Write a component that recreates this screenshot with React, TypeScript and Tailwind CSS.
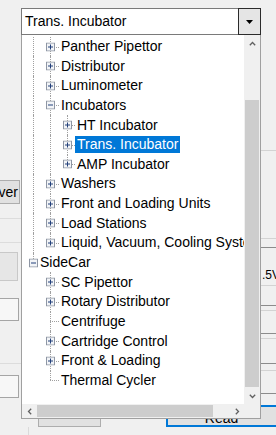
import type { ReactNode } from "react";

type TreeItem = {
  label: string;
  depth: 0 | 1 | 2;
  box?: "plus" | "minus";
  last?: boolean;
  cont: boolean[];
  selected?: boolean;
};

const ITEMS: TreeItem[] = [
  { label: "Panther Pipettor", depth: 1, box: "plus", cont: [true] },
  { label: "Distributor", depth: 1, box: "plus", cont: [true] },
  { label: "Luminometer", depth: 1, box: "plus", cont: [true] },
  { label: "Incubators", depth: 1, box: "minus", cont: [true] },
  { label: "HT Incubator", depth: 2, box: "plus", cont: [true, true] },
  { label: "Trans. Incubator", depth: 2, box: "plus", cont: [true, true], selected: true },
  { label: "AMP Incubator", depth: 2, box: "plus", cont: [true, true], last: true },
  { label: "Washers", depth: 1, box: "plus", cont: [true] },
  { label: "Front and Loading Units", depth: 1, box: "plus", cont: [true] },
  { label: "Load Stations", depth: 1, box: "plus", cont: [true] },
  { label: "Liquid, Vacuum, Cooling Systems", depth: 1, box: "plus", cont: [true], last: true },
  { label: "SideCar", depth: 0, box: "minus", cont: [], last: true },
  { label: "SC Pipettor", depth: 1, box: "plus", cont: [false] },
  { label: "Rotary Distributor", depth: 1, box: "plus", cont: [false] },
  { label: "Centrifuge", depth: 1, cont: [false] },
  { label: "Cartridge Control", depth: 1, box: "plus", cont: [false] },
  { label: "Front & Loading", depth: 1, box: "plus", cont: [false] },
  { label: "Thermal Cycler", depth: 1, cont: [false], last: true },
];

// per-level geometry inside the list viewport
const LINE_X = ["left-[11px]", "left-[28px]", "left-[45px]"];
const BOX_X = ["left-[7px]", "left-[24px]", "left-[41px]"];
const DASH_W = ["w-[5px]", "w-[9px]", "w-[8px]"];
const LABEL_PL = ["pl-[16px]", "pl-[37px]", "pl-[53px]"];

function Chevron({ dir }: { dir: "up" | "down" | "left" | "right" }) {
  const pts = {
    up: "0.8,4.2 3.5,1.5 6.2,4.2",
    down: "0.8,1.8 3.5,4.5 6.2,1.8",
    left: "4.2,0.8 1.5,3.5 4.2,6.2",
    right: "1.8,0.8 4.5,3.5 1.8,6.2",
  }[dir];
  const vertical = dir === "up" || dir === "down";
  return (
    <svg width={vertical ? 7 : 6} height={vertical ? 6 : 7} viewBox={vertical ? "0 0 7 6" : "0 0 6 7"}>
      <polyline points={pts} fill="none" stroke="#606060" strokeWidth={1.3} />
    </svg>
  );
}

function ExpandBox({ kind, pos }: { kind: "plus" | "minus"; pos: string }) {
  return (
    <svg
      width={9}
      height={9}
      viewBox="0 0 9 9"
      className={`absolute top-1/2 -translate-y-1/2 ${pos}`}
    >
      <rect x={0.5} y={0.5} width={8} height={8} fill="#f2f4f7" stroke="#8e96a4" />
      <line x1={2} y1={4.5} x2={7} y2={4.5} stroke="#23407a" />
      {kind === "plus" && <line x1={4.5} y1={2} x2={4.5} y2={7} stroke="#23407a" />}
    </svg>
  );
}

function Dotted({ className }: { className: string }) {
  return <div className={`absolute border-dotted border-[#a0a0a0] ${className}`} />;
}

function TreeRow({ item }: { item: TreeItem }) {
  const d = item.depth;
  return (
    <div className="relative h-[19.65px] whitespace-nowrap">
      {item.cont.map((on, i) =>
        on ? <Dotted key={i} className={`top-0 bottom-0 border-l ${LINE_X[i]}`} /> : null
      )}
      <Dotted className={`top-0 border-l ${LINE_X[d]} ${item.last ? "h-1/2" : "bottom-0"}`} />
      <Dotted className={`top-1/2 border-t ${LINE_X[d]} ${DASH_W[d]}`} />
      {item.box && <ExpandBox kind={item.box} pos={BOX_X[d]} />}
      <div className={`flex h-full items-center ${LABEL_PL[d]}`}>
        <span
          className={`h-[17px] px-[2px] leading-[17px] ${
            item.selected ? "bg-[#0078d7] text-white" : ""
          }`}
        >
          {item.label}
        </span>
      </div>
    </div>
  );
}

function Rule({ tone, mt }: { tone: "light" | "dark"; mt: string }) {
  return <div className={`h-px ${mt} ${tone === "dark" ? "bg-[#8c8c8c]" : "bg-[#d3d3d3]"}`} />;
}

function FormBackdrop() {
  return (
    <div className="flex h-full flex-col">
      <div className="flex h-[405px]">
        {/* left edge of the form */}
        <div className="w-[21px] shrink-0 overflow-hidden">
          <div className="ml-[-43px] mt-[180px] flex h-[24px] w-[63px] items-center justify-end border border-[#adadad] bg-[#e1e1e1] pr-[1px] leading-none">
            Server
          </div>
          <div className="mt-[14px] h-px bg-[#dcdcdc]" />
          <div className="mt-[23px] h-px bg-[#dcdcdc]" />
          <div className="mt-[9px] h-[29px] w-[18px] border-y border-r border-[#c8c8c8] bg-[#e6e6e6]" />
          <div className="mt-[17px] h-[23px] w-[19px] border-y border-r border-[#a5a5a5] bg-[#f7f7f7]" />
          <div className="mt-[42px] h-px bg-[#dcdcdc]" />
          <div className="mt-[11px] h-[23px] w-[19px] border-y border-r border-[#a5a5a5] bg-[#f7f7f7]" />
        </div>
        <div className="flex-1" />
        {/* right edge of the form */}
        <div className="w-[15px] shrink-0 overflow-hidden">
          <Rule tone="light" mt="mt-[150px]" />
          <Rule tone="light" mt="mt-[87px]" />
          <Rule tone="dark" mt="mt-[8px]" />
          <div className="mt-[21px] h-[12px] pl-[1px] text-[12px] leading-[12px]">.5V</div>
          <Rule tone="light" mt="mt-[4px]" />
          <Rule tone="dark" mt="mt-[19px]" />
          <Rule tone="light" mt="mt-[4px]" />
          <Rule tone="dark" mt="mt-[22px]" />
          <Rule tone="light" mt="mt-[4px]" />
          <Rule tone="dark" mt="mt-[24px]" />
          <Rule tone="light" mt="mt-[6px]" />
          <Rule tone="dark" mt="mt-[22px]" />
        </div>
      </div>
      <div className="flex h-[22px] shrink-0">
        <div className="ml-[38px] w-[63px] shrink-0 border border-[#adadad] bg-[#e1e1e1]" />
        <div className="ml-[65px] w-[120px] shrink-0 border-2 border-[#0078d7] bg-[#e1e1e1]">
          <div className="mt-[2px] w-[107px] text-center leading-[18px]">Read</div>
        </div>
      </div>
      <div className="ml-[28px] flex-1 border-l border-[#dadada]" />
    </div>
  );
}

function ScrollButton({ children, className }: { children: ReactNode; className: string }) {
  return <div className={`flex shrink-0 items-center justify-center ${className}`}>{children}</div>;
}

function DropList() {
  return (
    <div className="grid h-[384px] grid-cols-[1fr_16px] grid-rows-[1fr_14px] border-x border-b border-[#a0a0a0] bg-white">
      <div className="relative overflow-hidden pt-[1.7px]">
        {ITEMS.map((item) => (
          <TreeRow key={item.label} item={item} />
        ))}
      </div>
      <div className="flex flex-col bg-[#f0f0f0]">
        <ScrollButton className="h-[17px]">
          <Chevron dir="up" />
        </ScrollButton>
        <div className="h-[48px] shrink-0" />
        <div className="mx-[1px] flex-1 bg-[#cdcdcd]" />
        <ScrollButton className="h-[17px]">
          <Chevron dir="down" />
        </ScrollButton>
      </div>
      <div className="flex items-center bg-[#f0f0f0]">
        <ScrollButton className="h-full w-[15px]">
          <Chevron dir="left" />
        </ScrollButton>
        <div className="h-[12px] w-[176px] shrink-0 bg-[#cdcdcd]" />
        <div className="flex-1" />
        <ScrollButton className="h-full w-[15px]">
          <Chevron dir="right" />
        </ScrollButton>
      </div>
      <div className="bg-[#f0f0f0]" />
    </div>
  );
}

export default function App() {
  return (
    <div className="relative h-[435px] w-[276px] overflow-hidden bg-[#f0f0f0] font-['Liberation_Sans',Arial,sans-serif] text-[14px] text-black">
      <FormBackdrop />
      {/* open combo box with its tree drop-down */}
      <div className="absolute left-[21px] top-[8px] w-[240px]">
        <div className="flex h-[27px]">
          <div className="flex flex-1 items-center border-y border-l border-[#7a7a7a] bg-white pl-[3px]">
            Trans. Incubator
          </div>
          <div className="flex w-[23px] items-center justify-center border border-[#2b2b2b] bg-[#e5e5e5]">
            <svg width={7} height={4} viewBox="0 0 7 4">
              <polygon points="0,0 7,0 3.5,4" fill="#000" />
            </svg>
          </div>
        </div>
        <DropList />
      </div>
    </div>
  );
}
